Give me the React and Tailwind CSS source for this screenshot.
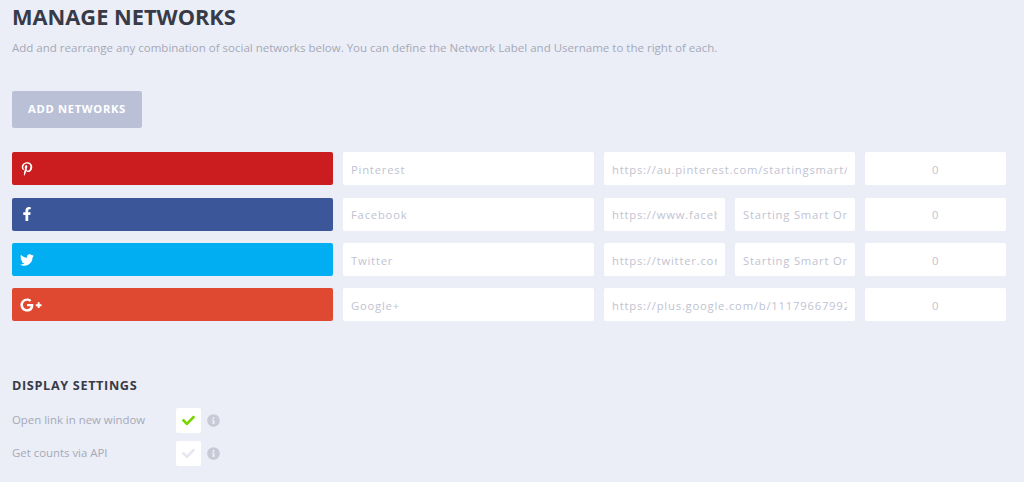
import { FaPinterestP, FaFacebookF, FaTwitter, FaGooglePlusG, FaCheck, FaInfoCircle } from 'react-icons/fa';

const networks = [
  { icon: FaPinterestP, iconClass: 'text-[14px] ml-[7.5px]', bar: 'bg-[#cb1c1f]', label: 'Pinterest', url: 'https://au.pinterest.com/startingsmart/' },
  { icon: FaFacebookF, iconClass: 'text-[14px] ml-[7.5px]', bar: 'bg-[#3b5799]', label: 'Facebook', url: 'https://www.facebook.com/startingsmart', name: 'Starting Smart Organisation' },
  { icon: FaTwitter, iconClass: 'text-[14px] ml-[7.5px]', bar: 'bg-[#00aef1]', label: 'Twitter', url: 'https://twitter.com/startingsmart', name: 'Starting Smart Organisation' },
  { icon: FaGooglePlusG, iconClass: 'text-[22px] ml-[7.5px]', bar: 'bg-[#e04931]', label: 'Google+', url: 'https://plus.google.com/b/111796679921234567890' },
];

const inputClass = 'h-[33px] min-w-0 rounded-[2px] bg-white px-2 pt-[1px] text-[11.25px] tracking-[0.07em] text-[#bfc3d1] outline-none';

const Field = ({ value, className = '' }) => (
  <input readOnly value={value} className={`${inputClass} ${className}`} />
);

const NetworkRow = ({ network }) => {
  const Icon = network.icon;
  return (
    <div className="flex h-[33px] gap-[10px]">
      <div className={`flex w-[321px] items-center rounded-[2px] text-white ${network.bar}`}>
        <Icon className={network.iconClass} />
      </div>
      <Field value={network.label} className="w-[251px]" />
      {network.name ? (
        <div className="flex w-[251px] gap-[10px]">
          <Field value={network.url} className="w-[121px]" />
          <Field value={network.name} className="w-[120px]" />
        </div>
      ) : (
        <Field value={network.url} className="w-[251px]" />
      )}
      <Field value="0" className="w-[141px] text-center text-[#b0b4c2]" />
    </div>
  );
};

const Setting = ({ label, checked }) => (
  <div className="flex h-[25px] items-center">
    <span className="w-[164px] pb-[2px] text-[11.4px] text-[#a5a9b7]">{label}</span>
    <span className="flex h-[25px] w-[25px] items-center justify-center rounded-[2px] bg-white">
      <FaCheck className={checked ? 'text-[13px] text-[#77d600]' : 'text-[13px] text-[#e6e8ef]'} />
    </span>
    <FaInfoCircle className="ml-[6px] text-[13px] text-[#c8cbd6]" />
  </div>
);

export default function App() {
  return (
    <div className="h-[482px] overflow-hidden bg-[#ebeef7] pl-[12px] pr-[18px] pt-[3px] font-['Open_Sans','Noto_Sans',sans-serif]">
      <h1 className="text-[21.8px] leading-[28px] font-bold text-[#383b47]">MANAGE NETWORKS</h1>
      <p className="mt-[7px] text-[11.53px] leading-[20px] text-[#a5a9b7]">
        Add and rearrange any combination of social networks below. You can define the Network Label and Username to the right of each.
      </p>
      <button className="mt-[33px] block h-[37px] w-[130px] rounded-[2px] bg-[#bac1d6] text-[11.2px] font-bold tracking-[0.06em] text-white">
        ADD NETWORKS
      </button>
      <div className="mt-[24.4px] flex flex-col gap-[12.33px]">
        {networks.map((network) => (
          <NetworkRow key={network.label} network={network} />
        ))}
      </div>
      <h2 className="mt-[55px] text-[12.7px] leading-[18px] font-bold tracking-[0.05em] text-[#383b47]">DISPLAY SETTINGS</h2>
      <div className="mt-[14px] flex flex-col gap-[8px]">
        <Setting label="Open link in new window" checked />
        <Setting label="Get counts via API" />
      </div>
    </div>
  );
}
